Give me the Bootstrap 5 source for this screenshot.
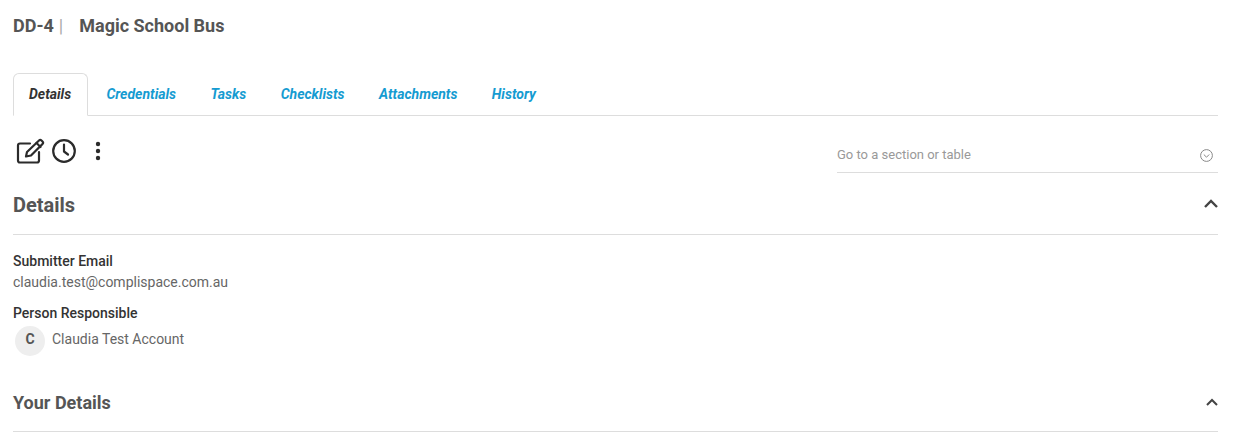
<!DOCTYPE html>
<html lang="en">
<head>
  <meta charset="UTF-8">
  <title>DD-4 Magic School Bus</title>
  <link href="https://cdn.jsdelivr.net/npm/bootstrap@5.3.0/dist/css/bootstrap.min.css" rel="stylesheet">
  <style>
    html, body { height: 437px; overflow: hidden; }
    body {
      font-family: Roboto, "Liberation Sans", sans-serif;
      font-size: 14px;
      color: #666;
      background: #fff;
    }
    .page-wrap { padding: 0 22px 0 13px; }
    .title-bar {
      height: 73px;
      padding-top: 15px;
      font-size: 18px;
      font-weight: 700;
      line-height: 21px;
      color: #555;
    }
    .title-sep { color: #aaa; font-weight: 400; margin: 0 16px 0 5px; }
    .detail-tabs { border-bottom: 1px solid #ddd; height: 43px; }
    .detail-tabs .nav-link {
      font-size: 14px;
      font-weight: 700;
      font-style: italic;
      color: #159bd1;
      padding: 11px 16.2px;
      height: 43px;
      line-height: 18px;
      border-color: transparent;
      margin-bottom: -1px;
    }
    .detail-tabs .nav-link.active {
      color: #333;
      border-color: #ddd #ddd #fff;
      padding: 11px 16px 11px 15px;
      margin-right: 1px;
    }
    .tool-row { height: 57px; }
    .tool-icons { padding: 22px 0 0 3px; }
    .tool-icons button { background: none; border: 0; padding: 0; line-height: 0; }
    .btn-clock { margin-left: 6px; }
    .btn-more { margin-left: 13px; margin-top: 2px; }
    .jump-box {
      width: 381px;
      height: 41px;
      margin-top: 16px;
      border-bottom: 1px solid #ddd;
      font-size: 13px;
      color: #999;
      padding-top: 15px;
      line-height: 16px;
    }
    .jump-icon { margin-top: 2px; margin-right: 5px; }
    .section-head {
      border-bottom: 1px solid #ddd;
      font-size: 18px;
      font-weight: 700;
      line-height: 21px;
      color: #555;
    }
    .head-first { height: 62px; padding-top: 21px; font-size: 20px; line-height: 23px; }
    .head-second { height: 76px; padding-top: 36px; }
    .head-chevron { margin-top: 5px; }
    .head-chevron-sm { margin-top: 6px; }
    .field-label { font-weight: 500; color: #333; line-height: 18px; }
    .field-value { line-height: 18px; margin-top: 3px; }
    .field-block { padding-top: 17px; }
    .field-next { margin-top: 13px; }
    .avatar-dot {
      width: 30px; height: 30px;
      background: #eee;
      border-radius: 50%;
      margin-left: 2px;
      margin-right: 7px;
      padding-bottom: 3px;
      font-size: 14px;
      font-weight: 700;
      color: #555;
    }
    .person-row { margin-top: 4px; height: 30px; }
    .person-name { margin-top: -4px; }
  </style>
</head>
<body>
  <div class="page-wrap">
    <div class="title-bar">DD-4<span class="title-sep">|</span>Magic School Bus</div>

    <ul class="nav nav-tabs detail-tabs">
      <li class="nav-item"><a class="nav-link active" href="#">Details</a></li>
      <li class="nav-item"><a class="nav-link" href="#">Credentials</a></li>
      <li class="nav-item"><a class="nav-link" href="#">Tasks</a></li>
      <li class="nav-item"><a class="nav-link" href="#">Checklists</a></li>
      <li class="nav-item"><a class="nav-link" href="#">Attachments</a></li>
      <li class="nav-item"><a class="nav-link" href="#">History</a></li>
    </ul>

    <div class="tool-row d-flex justify-content-between">
      <div class="tool-icons d-flex align-items-start">
        <button type="button" aria-label="Edit">
          <svg width="29" height="27" viewBox="0 0 29 27" fill="none" stroke="#2b2b2b" stroke-width="2.2" stroke-linejoin="round" stroke-linecap="round">
            <path d="M14 5.5H4a2 2 0 0 0-2 2v15a2 2 0 0 0 2 2h17a2 2 0 0 0 2-2V14"/>
            <path d="M10 18.5l1-4.5L23 2.5a1.8 1.8 0 0 1 2.5 0l1 1a1.8 1.8 0 0 1 0 2.5L15 17.5z"/>
            <path d="M20.5 5l4 4"/>
          </svg>
        </button>
        <button type="button" aria-label="History" class="btn-clock">
          <svg width="26" height="26" viewBox="0 0 26 26" fill="none" stroke="#2b2b2b" stroke-width="2.2" stroke-linecap="round" stroke-linejoin="round">
            <circle cx="13" cy="13" r="10.8"/>
            <path d="M13 6.5V13.5l4 3"/>
          </svg>
        </button>
        <button type="button" aria-label="More" class="btn-more">
          <svg width="16" height="26" viewBox="0 0 16 26" fill="#2b2b2b">
            <circle cx="8" cy="4" r="2.2"/><circle cx="8" cy="11" r="2.2"/><circle cx="8" cy="18" r="2.2"/>
          </svg>
        </button>
      </div>
      <div class="jump-box d-flex justify-content-between">
        <span>Go to a section or table</span>
        <svg class="jump-icon" width="13" height="13" viewBox="0 0 13 13" fill="none" stroke="#888">
          <circle cx="6.5" cy="6.5" r="5.9"/>
          <path d="M3.8 5.5l2.7 2.7 2.7-2.7"/>
        </svg>
      </div>
    </div>

    <div class="section-head head-first d-flex justify-content-between">
      <span>Details</span>
      <svg class="head-chevron" width="14" height="9" viewBox="0 0 14 9" fill="none" stroke="#444" stroke-width="2.4">
        <path d="M1 8l6-6 6 6"/>
      </svg>
    </div>

    <div class="field-block">
      <div class="field-label">Submitter Email</div>
      <div class="field-value">claudia.test@complispace.com.au</div>
      <div class="field-label field-next">Person Responsible</div>
      <div class="person-row d-flex align-items-center">
        <span class="avatar-dot d-flex align-items-center justify-content-center">C</span>
        <span class="person-name">Claudia Test Account</span>
      </div>
    </div>

    <div class="section-head head-second d-flex justify-content-between">
      <span>Your Details</span>
      <svg class="head-chevron-sm" width="12" height="8" viewBox="0 0 12 8" fill="none" stroke="#444" stroke-width="2">
        <path d="M1 7l5-5 5 5"/>
      </svg>
    </div>
  </div>
  <script src="https://cdn.jsdelivr.net/npm/bootstrap@5.3.0/dist/js/bootstrap.bundle.min.js"></script>
</body>
</html>
